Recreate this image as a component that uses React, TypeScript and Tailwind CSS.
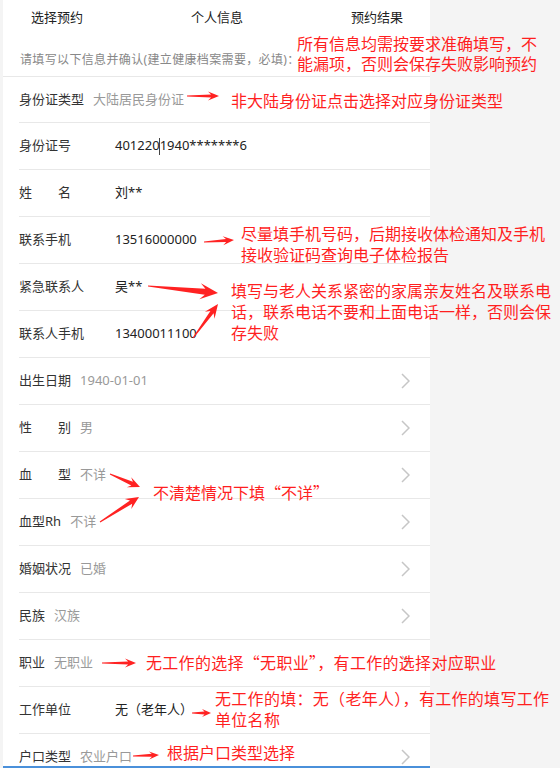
import React from 'react';

type Row = {
  label: React.ReactNode;
  value: React.ReactNode;
  kind: 'input' | 'select';
  chevron?: boolean;
};

const Spread: React.FC<{ a: string; b: string }> = ({ a, b }) => (
  <span className="flex w-[52px] justify-between">
    <span>{a}</span>
    <span>{b}</span>
  </span>
);

const Chevron = () => (
  <svg className="ml-auto shrink-0" width="9" height="16" viewBox="0 0 9 16">
    <polyline points="1,1 8,8 1,15" fill="none" stroke="#c6c6c6" strokeWidth="1.5" />
  </svg>
);

const idValue = (
  <span>
    401220
    <span className="inline-block w-px h-[17px] -ml-px bg-[#444] align-middle" />
    1940*******6
  </span>
);

const rows: Row[] = [
  { label: '身份证类型', value: '大陆居民身份证', kind: 'select' },
  { label: '身份证号', value: idValue, kind: 'input' },
  { label: <Spread a="姓" b="名" />, value: '刘**', kind: 'input' },
  { label: '联系手机', value: '13516000000', kind: 'input' },
  { label: '紧急联系人', value: '吴**', kind: 'input' },
  { label: '联系人手机', value: '13400011100', kind: 'input' },
  { label: '出生日期', value: '1940-01-01', kind: 'select', chevron: true },
  { label: <Spread a="性" b="别" />, value: '男', kind: 'select', chevron: true },
  { label: <Spread a="血" b="型" />, value: '不详', kind: 'select', chevron: true },
  { label: '血型Rh', value: '不详', kind: 'select', chevron: true },
  { label: '婚姻状况', value: '已婚', kind: 'select', chevron: true },
  { label: '民族', value: '汉族', kind: 'select', chevron: true },
  { label: '职业', value: '无职业', kind: 'select', chevron: true },
  { label: '工作单位', value: '无（老年人）', kind: 'input' },
  { label: '户口类型', value: '农业户口', kind: 'select', chevron: true },
];

// annotation arrows: tail x/y, tip x/y, head length, head width, shaft width
const arrows: [number, number, number, number, number, number, number][] = [
  [187, 96, 219, 96, 11, 9, 3],
  [204, 242, 234, 240, 11, 9, 3],
  [148, 286, 218, 293, 18, 16, 6],
  [193, 338, 218, 304, 14, 12, 4],
  [110, 474, 140, 487, 12, 11, 4],
  [100, 522, 139, 497, 13, 12, 4],
  [102, 663, 136, 663, 11, 9, 3],
  [192, 713, 211, 713, 9, 8, 3],
  [133, 756, 159, 755, 10, 8, 3],
];

function arrowPoints([x1, y1, x2, y2, h, hw, sw]: [number, number, number, number, number, number, number]) {
  const dx = x2 - x1;
  const dy = y2 - y1;
  const len = Math.hypot(dx, dy);
  const ux = dx / len;
  const uy = dy / len;
  const nx = -uy;
  const ny = ux;
  const bx = x2 - ux * h;
  const by = y2 - uy * h;
  const jx = x2 - ux * h * 0.72;
  const jy = y2 - uy * h * 0.72;
  const pts = [
    [x1 + nx * 0.5, y1 + ny * 0.5],
    [jx + (nx * sw) / 2, jy + (ny * sw) / 2],
    [bx + (nx * hw) / 2, by + (ny * hw) / 2],
    [x2, y2],
    [bx - (nx * hw) / 2, by - (ny * hw) / 2],
    [jx - (nx * sw) / 2, jy - (ny * sw) / 2],
    [x1 - nx * 0.5, y1 - ny * 0.5],
  ];
  return pts.map((p) => `${p[0].toFixed(1)},${p[1].toFixed(1)}`).join(' ');
}

const notes: { className: string; text: string }[] = [
  { className: 'left-[297px] top-[33px] w-[250px] leading-[20px]', text: '所有信息均需按要求准确填写，不能漏项，否则会保存失败影响预约' },
  { className: 'left-[231px] top-[90px] w-[300px] leading-[21px]', text: '非大陆身份证点击选择对应身份证类型' },
  { className: 'left-[241px] top-[223px] w-[310px] leading-[21px]', text: '尽量填手机号码，后期接收体检通知及手机接收验证码查询电子体检报告' },
  { className: 'left-[231px] top-[280px] w-[324px] leading-[21px]', text: '填写与老人关系紧密的家属亲友姓名及联系电话，联系电话不要和上面电话一样，否则会保存失败' },
  { className: 'left-[153px] top-[482px] w-[260px] leading-[21px]', text: '不清楚情况下填“不详”' },
  { className: 'left-[146px] top-[652px] w-[400px] leading-[21px] tracking-[0.3px]', text: '无工作的选择“无职业”，有工作的选择对应职业' },
  { className: 'left-[215px] top-[688px] w-[344px] leading-[21px] tracking-[0.3px]', text: '无工作的填：无（老年人），有工作的填写工作单位名称' },
  { className: 'left-[167px] top-[742px] w-[200px] leading-[21px]', text: '根据户口类型选择' },
];

const FormRow: React.FC<{ row: Row; first?: boolean }> = ({ row, first }) => (
  <div
    className={
      first
        ? 'ml-[16px] h-[46px] flex items-center pr-[20px] border-b border-[#e8e8e8]'
        : 'ml-[16px] h-[47px] flex items-center pr-[20px] border-b border-[#e8e8e8]'
    }
  >
    {row.kind === 'input' ? (
      <>
        <span className="w-[96px] shrink-0 text-[#333]">{row.label}</span>
        <span className="text-[#222]">{row.value}</span>
      </>
    ) : (
      <>
        <span className="text-[#333]">{row.label}</span>
        <span className="ml-[9px] text-[#999]">{row.value}</span>
      </>
    )}
    {row.chevron && <Chevron />}
  </div>
);

export default function App() {
  return (
    <div className="relative w-[560px] h-[768px] overflow-hidden bg-[#f4f4f4] font-['Noto_Sans','Noto_Sans_CJK_SC',sans-serif] text-[13px]">
      <div className="ml-[3px] w-[427px] h-full bg-white">
        <div className="flex h-[35px] items-center pl-[28px] text-[#222]">
          <span className="w-[160px] shrink-0">选择预约</span>
          <span className="w-[160px] shrink-0">个人信息</span>
          <span className="w-[160px] shrink-0">预约结果</span>
        </div>
        <div className="h-[42px] flex items-end pb-[8px] pl-[17px] border-b border-[#e8e8e8] text-[12px] leading-[17px] tracking-[0.35px] text-[#888]">
          请填写以下信息并确认(建立健康档案需要，必填)：
        </div>
        {rows.map((row, i) => (
          <FormRow key={i} row={row} first={i === 0} />
        ))}
      </div>

      <div className="absolute bottom-0 left-[3px] w-[427px] h-[2px] bg-[#4a90da]" />

      <svg className="absolute inset-0 pointer-events-none" width={560} height={768}>
        {arrows.map((a, i) => (
          <polygon key={i} points={arrowPoints(a)} fill="#ff2222" />
        ))}
      </svg>

      {notes.map((n, i) => (
        <div
          key={i}
          className={`absolute text-[16px] text-[#ff1f1f] font-['Noto_Sans_CJK_SC',sans-serif] ${n.className}`}
        >
          {n.text}
        </div>
      ))}
    </div>
  );
}
